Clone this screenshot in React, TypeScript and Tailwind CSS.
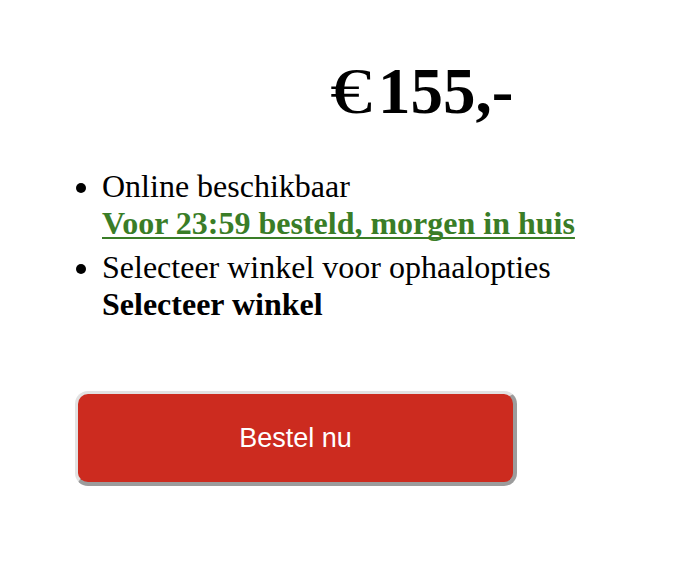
import React from 'react';

const App: React.FC = () => {
  return (
    <div className="min-h-[562px] w-[696px] bg-white text-black flex flex-col" style={{ fontFamily: '"Liberation Serif", "Times New Roman", serif' }}>
      <div className="mt-[54px] pl-[330px] text-[65px] leading-[74px] font-bold">
        <span className="inline-block w-[48px] font-normal scale-x-[1.3] origin-left">€</span>155,-
      </div>

      <ul className="mt-[40px] pl-[102px] list-disc text-[32px] leading-[37px]">
        <li>
          Online beschikbaar
          <br />
          <a href="#" className="font-bold text-[#3a7d27] underline decoration-2 underline-offset-[3px] [text-decoration-skip-ink:none]">
            Voor 23:59 besteld, morgen in huis
          </a>
        </li>
        <li className="mt-[7px]">
          Selecteer winkel voor ophaalopties
          <br />
          <span className="font-bold">Selecteer winkel</span>
        </li>
      </ul>

      <div className="mt-[68px] pl-[75px]">
        <button
          className="w-[442px] h-[95px] rounded-[13px] bg-[#cc2b1f] text-white text-[27px] border-[3px] border-r-4 border-b-4 border-t-[#e2e2e2] border-l-[#e2e2e2] border-r-[#9c9c9c] border-b-[#9c9c9c]"
          style={{ fontFamily: '"Liberation Sans", Arial, sans-serif' }}
        >
          Bestel nu
        </button>
      </div>
    </div>
  );
};

export default App;
